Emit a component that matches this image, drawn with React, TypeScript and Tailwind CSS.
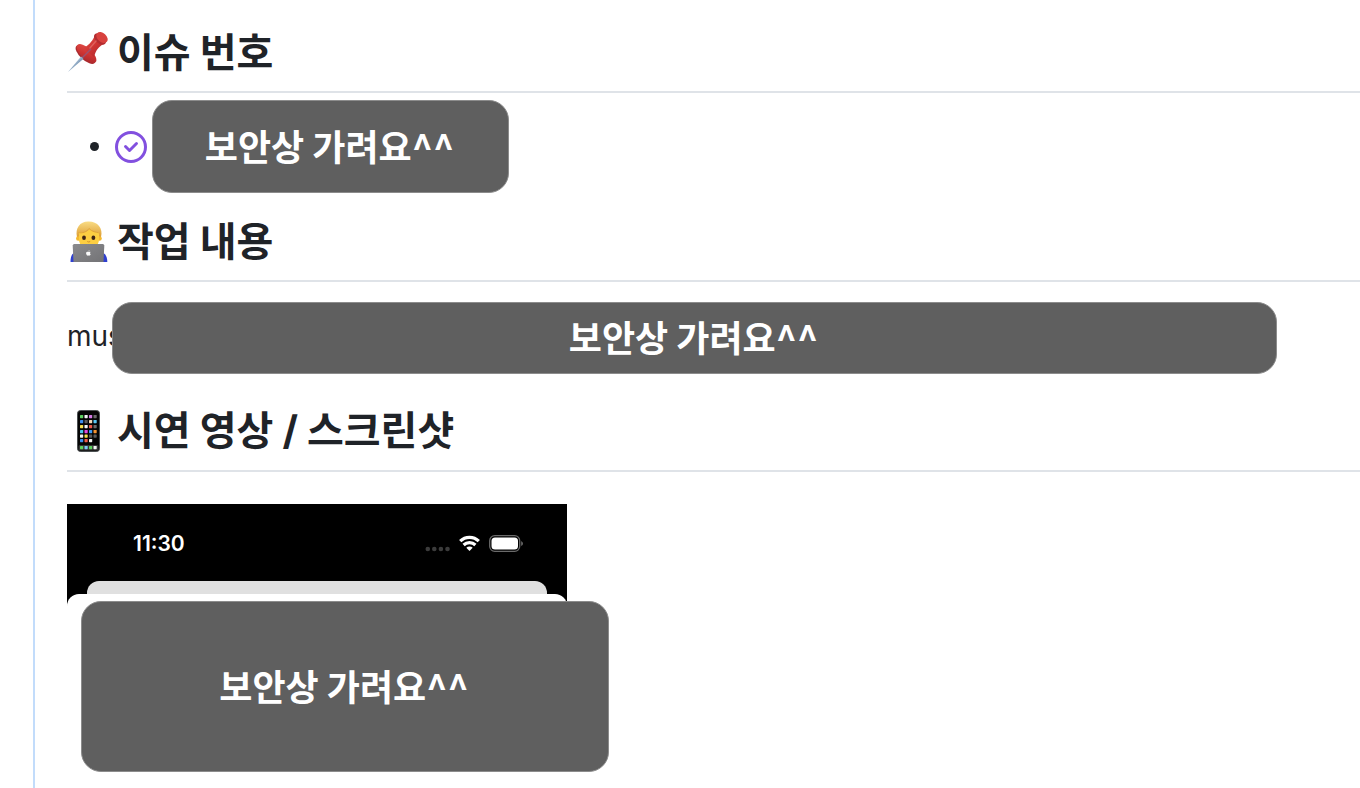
import type { ReactNode } from "react"
import clsx from "clsx"

const appColors = [
  ["#5ed35f", "#f4f4f4", "#d67be8", "#6b6b6b"],
  ["#3d8ff0", "#5a5a5a", "#f3d9b8", "#59c8f5"],
  ["#f7e04a", "#f4f4f4", "#f0594a", "#6b6b6b"],
  ["#4bc7ee", "#e24be0", "#3d9bf5", "#f59331"],
  ["#f4f4f4", "#f7e04a", "#5a5a5a", "#5a5a5a"],
  ["#3d8ff0", "#f0594a", "#f4f4f4", ""],
]

const dockColors = ["#5ed35f", "#7cc8f7", "#5ed35f", "#f4f4f4"]

const rowTops = [5, 10, 15, 20, 24.5, 29]
const colLefts = [13, 17.5, 22, 26.5]

function PinIcon() {
  return (
    <svg viewBox="0 0 42 42" className="size-[42px] shrink-0" aria-hidden="true">
      <defs>
        <linearGradient id="pin" x1="0" y1="0" x2="1" y2="1">
          <stop offset="0" stopColor="#e2504a" />
          <stop offset="0.5" stopColor="#cf3433" />
          <stop offset="1" stopColor="#a5262a" />
        </linearGradient>
        <linearGradient id="needle" x1="0" y1="0" x2="1" y2="1">
          <stop offset="0.3" stopColor="#c9dcee" />
          <stop offset="0.55" stopColor="#7f9bb8" />
          <stop offset="0.75" stopColor="#2f3947" />
        </linearGradient>
      </defs>
      <ellipse cx="18.5" cy="23.5" rx="12.500" ry="5.500" transform="rotate(43 18.5 23.5)" fill="#a92a2f" />
      <ellipse cx="19.5" cy="22.5" rx="12.500" ry="5.500" transform="rotate(43 19.5 22.5)" fill="url(#pin)" />
      <path d="M16 17 C21 15 25 11 27.5 5.500 L37 13 C32 15 29 19 27 26 Z" fill="url(#pin)" />
      <ellipse cx="33" cy="8" rx="7" ry="4.500" transform="rotate(42 33 8)" fill="#b32c30" />
      <ellipse cx="35" cy="6.500" rx="6.500" ry="4.500" transform="rotate(42 35 6.5)" fill="#d8413e" />
      <path d="M29 10 L23 17" stroke="#e5706b" strokeWidth="1.500" strokeLinecap="round" opacity="0.7" />
      <path d="M15 27 L24 18" stroke="#8f5a80" strokeWidth="1.500" opacity="0.8" />
      <path d="M1 41 L14 25.500 L16.500 27.800 Z" fill="url(#needle)" />
    </svg>
  )
}

function DeveloperIcon() {
  return (
    <svg viewBox="0 0 42 42" className="size-[42px] shrink-0" aria-hidden="true">
      <defs>
        <linearGradient id="hair" x1="0" y1="0" x2="0" y2="1">
          <stop offset="0" stopColor="#f9dc84" />
          <stop offset="1" stopColor="#dd9d33" />
        </linearGradient>
        <linearGradient id="laptop" x1="0" y1="0" x2="1" y2="1">
          <stop offset="0" stopColor="#8a8a8d" />
          <stop offset="1" stopColor="#737376" />
        </linearGradient>
      </defs>
      <path d="M3.5 42 C3.5 36 5 33 9 32 H34 C38 33 40.3 36 40.3 42 Z" fill="#2f3fd0" />
      <path d="M10 17 C8 8 13 1.5 21 1.5 C30 1 36.5 8 34 17 Z" fill="url(#hair)" />
      <circle cx="11.3" cy="18.5" r="2.3" fill="#f5b92e" />
      <circle cx="32.5" cy="18.5" r="2.3" fill="#f5b92e" />
      <path d="M12 12 C16 13 20 12 23 9 C26 12 29 12.5 32 12 V19 C32 25 28 29 22 29 C16 29 12 25 12 19 Z" fill="#fcce42" />
      <path d="M11.5 12.5 C15 13.5 20 12 22 8.5 C25 12 29 12 32.5 13" fill="none" stroke="#dca13a" strokeWidth="0.9" />
      <ellipse cx="17" cy="17.8" rx="1.9" ry="2.3" fill="#3f2515" />
      <ellipse cx="26.4" cy="17.8" rx="1.9" ry="2.3" fill="#3f2515" />
      <path d="M20.3 21.5 Q21.7 22.5 23.2 21.5" fill="none" stroke="#d3902a" strokeWidth="1" />
      <path d="M7.3 24 H35.7 Q37.3 24 37.3 25.5 L36.5 42 H6.5 L5.7 25.5 Q5.7 24 7.3 24 Z" fill="url(#laptop)" />
      <path d="M21.4 31.9 C19.5 31.1 19 32.3 19.1 33.5 C19.3 35 20.4 36.1 21.4 35.6 C22.5 36.1 23.5 35 23.7 34.3 C22.8 33.7 22.9 32.7 23.6 32.1 C22.8 31.4 22 31.6 21.4 31.9 Z M21.4 31.5 Q21.5 30.3 22.5 30 Q22.5 31.2 21.4 31.5" fill="#fafafa" />
    </svg>
  )
}

function PhoneIcon() {
  return (
    <svg viewBox="0 0 42 42" className="size-[42px] shrink-0" aria-hidden="true">
      <rect x="10.5" y="0.5" width="22" height="41" rx="3" fill="#050505" stroke="#4b4f51" strokeWidth="1" />
      {appColors.map((row, r) =>
        row.map((color, c) =>
          color ? <rect key={`${r}-${c}`} x={colLefts[c]} y={rowTops[r]} width="3.2" height="3.2" rx="0.6" fill={color} /> : null
        )
      )}
      <rect x="11.5" y="35" width="20" height="5.5" rx="1.5" fill="#353535" />
      {dockColors.map((color, c) => (
        <rect key={c} x={colLefts[c]} y="36" width="3.2" height="3.2" rx="0.6" fill={color} />
      ))}
    </svg>
  )
}

function IssueClosedIcon() {
  return (
    <svg viewBox="0 0 16 16" className="size-8 shrink-0 fill-[#8250df]" role="img" aria-label="Closed issue">
      <path d="M11.28 6.78a.75.75 0 0 0-1.06-1.06L7.25 8.69 5.78 7.22a.75.75 0 0 0-1.06 1.06l2 2a.75.75 0 0 0 1.06 0l3.5-3.5Z" />
      <path d="M16 8A8 8 0 1 1 0 8a8 8 0 0 1 16 0Zm-1.5 0a6.5 6.5 0 1 0-13 0 6.5 6.5 0 0 0 13 0Z" />
    </svg>
  )
}

function SectionTitle({ icon, children }: { icon: ReactNode; children: ReactNode }) {
  return (
    <h2 className="flex items-center gap-2 border-b-2 border-[#dfe3e8] pt-6 pb-[15px] text-[40px] leading-[44px] font-bold">
      {icon}
      <span className="pb-1">{children}</span>
    </h2>
  )
}

function Redacted({ className }: { className: string }) {
  return (
    <div
      className={clsx(
        "flex items-center justify-center rounded-[20px] border border-[#8c8c8c] bg-[#5f5f5f] pr-0.5 pb-1 text-4xl font-bold text-white",
        className
      )}
    >
      보안상 가려요^^
    </div>
  )
}

function StatusBar() {
  return (
    <div className="flex h-[77px] items-center justify-between pt-0.5 pr-11 pl-[66px] text-white">
      <span className="font-['Inter',sans-serif] text-[21px] leading-6 font-semibold">11:30</span>
      <div className="flex items-center gap-[9px]">
        <svg viewBox="0 0 25 17" className="h-[17px] w-[25px] fill-[#3c3c3c]" aria-hidden="true">
          <circle cx="2.8" cy="14" r="2.3" />
          <circle cx="9.3" cy="14" r="2.3" />
          <circle cx="15.9" cy="14" r="2.3" />
          <circle cx="22.5" cy="14" r="2.3" />
        </svg>
        <svg viewBox="0 0 21 17" className="h-[17px] w-[21px]" fill="none" stroke="white" strokeWidth="3.2" aria-hidden="true">
          <path d="M1.2 6.2 A13.2 13.2 0 0 1 19.8 6.2" />
          <path d="M4.6 10 A8.5 8.5 0 0 1 16.4 10" />
          <path d="M10.5 16 L7.3 12.7 A4.6 4.6 0 0 1 13.7 12.7 Z" fill="white" stroke="none" />
        </svg>
        <svg viewBox="0 0 34 17" className="h-[17px] w-[34px]" aria-hidden="true">
          <rect x="0.7" y="0.7" width="30" height="15.6" rx="5" fill="none" stroke="#6a6a6a" strokeWidth="1.3" />
          <rect x="2.5" y="2.5" width="26.5" height="12" rx="3.5" fill="white" />
          <path d="M32.2 6 Q34 7 34 8.5 Q34 10 32.2 11 Z" fill="#6a6a6a" />
        </svg>
      </div>
    </div>
  )
}

export default function App() {
  return (
    <div className="min-h-screen overflow-hidden bg-white pl-[33px] font-['Noto_Sans_CJK_KR',sans-serif] text-[#1f2328]">
      <main className="min-h-screen border-l-2 border-[#c2dcfb] pt-1 pl-8">
        {/* Issue number */}
        <section>
          <SectionTitle icon={<PinIcon />}>이슈 번호</SectionTitle>
          <ul className="pt-[7px] pl-[23px]">
            <li className="flex items-center">
              <span className="mr-4 size-[9px] rounded-full bg-[#1f2328]" />
              <IssueClosedIcon />
              <Redacted className="ml-[5px] h-[93px] w-[357px]" />
            </li>
          </ul>
        </section>

        {/* Work details */}
        <section>
          <SectionTitle icon={<DeveloperIcon />}>작업 내용</SectionTitle>
          <div className="flex items-center pt-5 pr-[83px] pb-2">
            <p className="w-[45px] pb-1 font-['Inter',sans-serif] text-[28px] leading-10">mus</p>
            <Redacted className="relative h-[72px] flex-1" />
          </div>
        </section>

        {/* Demo */}
        <section>
          <SectionTitle icon={<PhoneIcon />}>
            시연 영상 <span className="font-['Inter',sans-serif] leading-none">/</span> 스크린샷
          </SectionTitle>
          <div className="mt-8 w-[500px] bg-black">
            <StatusBar />
            <div className="mx-5 h-[13px] rounded-t-xl bg-[#e0e0e0]" />
            <div className="rounded-t-xl bg-white pt-[7px] pl-[14px]">
              <Redacted className="h-[171px] w-[528px]" />
            </div>
          </div>
        </section>
      </main>
    </div>
  )
}
